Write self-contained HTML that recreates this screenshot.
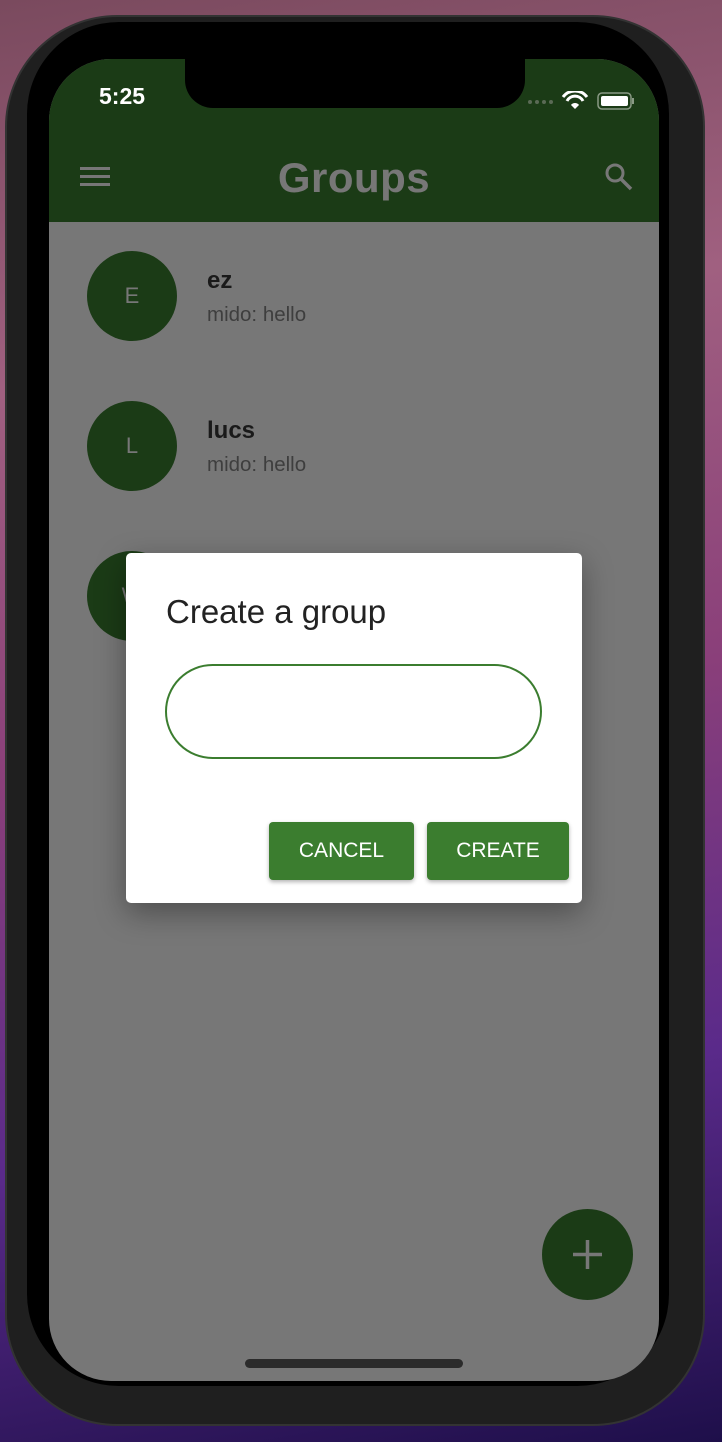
<!DOCTYPE html>
<html><head><meta charset="utf-8"><style>
*{margin:0;padding:0;box-sizing:border-box}
body{width:722px;height:1442px;overflow:hidden;position:relative;font-family:"Liberation Sans",sans-serif;
background:linear-gradient(170deg,#7a4a5e 0%,#a06080 25%,#8a3f7a 50%,#5a2a8a 75%,#1e0f4a 100%);}
.frame{position:absolute;left:5px;top:15px;width:700px;height:1411px;border-radius:112px;background:#1f1f1f;border:2px solid #333}
.bezel{position:absolute;left:27px;top:22px;width:642px;height:1364px;border-radius:92px;background:#000}
.screen{position:absolute;left:49px;top:59px;width:610px;height:1322px;border-radius:62px;background:#777;overflow:hidden}
.header{position:absolute;left:0;top:0;width:610px;height:163px;background:#1b3b16}
.notch{position:absolute;left:136px;top:-10px;width:340px;height:59px;background:#000;border-radius:0 0 28px 28px}
.time{position:absolute;left:50px;top:24px;color:#fff;font-size:23px;font-weight:bold}
.title{position:absolute;left:0;width:610px;top:95px;text-align:center;color:#777;font-size:42px;font-weight:bold;letter-spacing:0.5px}
.av{position:absolute;left:38px;width:90px;height:90px;border-radius:50%;background:#1b3b16;color:#777;font-size:22px;text-align:center;line-height:90px}
.name{position:absolute;left:158px;font-size:24px;font-weight:bold;color:#1a1a1a}
.sub{position:absolute;left:158px;font-size:20.5px;color:#3e3e3e}
.dlg{position:absolute;left:77px;top:494px;width:456px;height:350px;background:#fff;border-radius:5px;box-shadow:0 10px 30px rgba(0,0,0,.35)}
.dt{position:absolute;left:40px;top:40px;font-size:33px;color:#222}
.inp{position:absolute;left:39px;top:111px;width:377px;height:95px;border:2px solid #3b7d2f;border-radius:48px}
.btn{position:absolute;top:269px;height:58px;background:#3b7d2f;color:#fff;border-radius:4px;font-size:21px;text-align:center;line-height:58px;box-shadow:0 2px 4px rgba(0,0,0,.3)}
.fab{position:absolute;left:493px;top:1150px;width:91px;height:91px;border-radius:50%;background:#1b3b16}
.home{position:absolute;left:196px;top:1300px;width:218px;height:9px;border-radius:5px;background:#2b2b2b}
</style></head><body>
<div class="frame"></div>
<div class="bezel"></div>
<div class="screen">
 <div class="header">
  <div class="notch"></div>
  <div class="time">5:25</div>
  <svg style="position:absolute;left:476px;top:32px" width="110" height="20" viewBox="0 0 110 20">
   <circle cx="5" cy="11" r="2" fill="#5a6a55"/><circle cx="12" cy="11" r="2" fill="#5a6a55"/><circle cx="19" cy="11" r="2" fill="#5a6a55"/><circle cx="26" cy="11" r="2" fill="#5a6a55"/>
   <path d="M38 6 A15 15 0 0 1 62 6" stroke="#fff" stroke-width="3" fill="none"/>
   <path d="M42 10 A9 9 0 0 1 58 10" stroke="#fff" stroke-width="3" fill="none"/>
   <path d="M46 14 L50 18 L54 14 A5 5 0 0 0 46 14Z" fill="#fff"/>
   <rect x="73" y="2" width="33" height="16" rx="4" fill="none" stroke="#8a9a85" stroke-width="1.5"/>
   <rect x="76" y="5" width="27" height="10" rx="2" fill="#fff"/>
   <rect x="107" y="7" width="2" height="6" fill="#8a9a85"/>
  </svg>
  <svg style="position:absolute;left:30px;top:107px" width="32" height="22"><rect x="1" y="1" width="30" height="3" fill="#777"/><rect x="1" y="9" width="30" height="3" fill="#777"/><rect x="1" y="17" width="30" height="3" fill="#777"/></svg>
  <div class="title">Groups</div>
  <svg style="position:absolute;left:554px;top:102px" width="32" height="32"><circle cx="12" cy="12" r="8" stroke="#777" stroke-width="3" fill="none"/><path d="M18 18 L28 28" stroke="#777" stroke-width="3.5"/></svg>
 </div>
 <div class="av" style="top:192px">E</div>
 <div class="name" style="top:208px">ez</div>
 <div class="sub" style="top:244px">mido: hello</div>
 <div class="av" style="top:342px">L</div>
 <div class="name" style="top:358px">lucs</div>
 <div class="sub" style="top:394px">mido: hello</div>
 <div class="av" style="top:492px">W</div>
 <div class="dlg">
  <div class="dt">Create a group</div>
  <div class="inp"></div>
  <div class="btn" style="left:143px;width:145px">CANCEL</div>
  <div class="btn" style="left:301px;width:142px">CREATE</div>
 </div>
 <div class="fab"><svg width="91" height="91"><path d="M45.5 31 V60 M31 45.5 H60" stroke="#777" stroke-width="3.5"/></svg></div>
 <div class="home"></div>
</div>
</body></html>
